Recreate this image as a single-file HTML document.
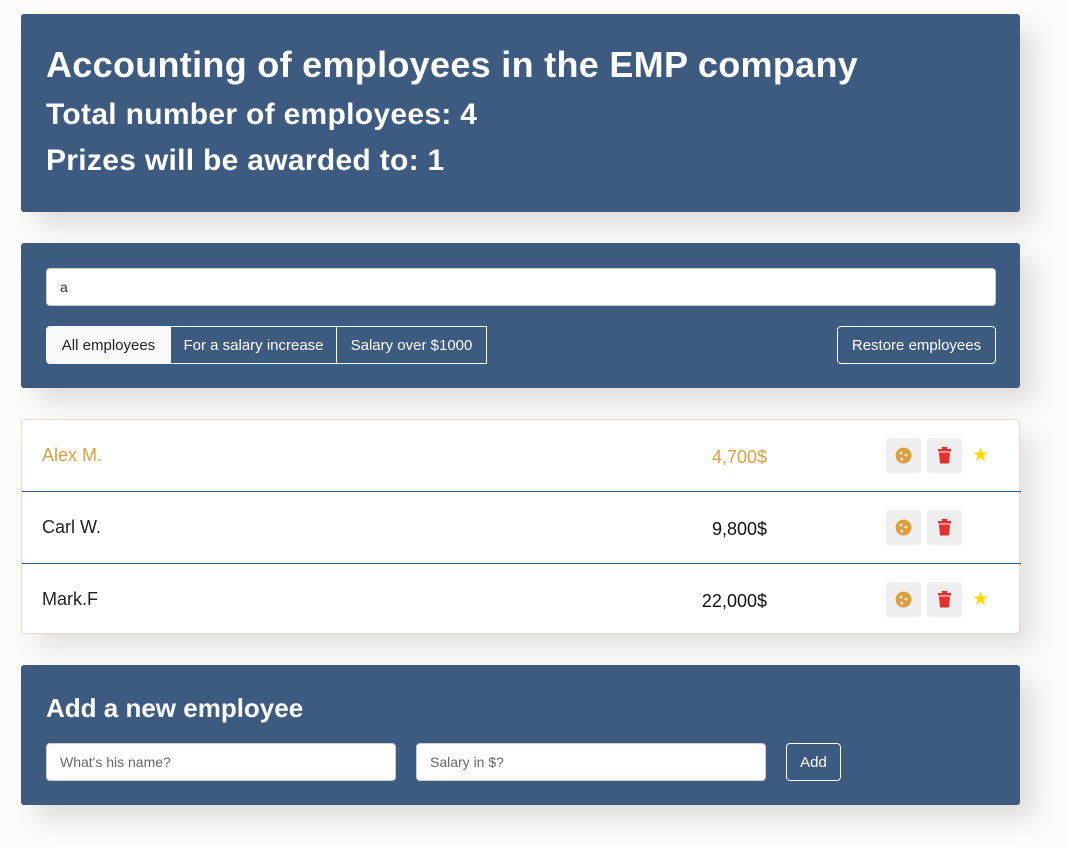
<!DOCTYPE html>
<html><head><style>
body{margin:0;background:#fdfcfa;font-family:"Liberation Sans",sans-serif;width:1069px;height:847px;overflow:hidden;position:relative}
.p{position:absolute;left:21px;width:999px;background:#3d5a80;border-radius:3px;box-shadow:15px 15px 25px rgba(0,0,0,.12);color:#fff}
.in{position:absolute;background:#fff;border-radius:4px;border:1px solid #ccc;box-sizing:border-box;font-size:14px;color:#333;padding:0 13px;display:flex;align-items:center}
.b{position:absolute;border:1px solid #fff;box-sizing:border-box;font-size:15px;display:flex;align-items:center;justify-content:center;color:#fff}
.row{position:absolute;left:0;width:999px;height:72px;border-bottom:1px solid #3d5a80;box-sizing:border-box}
.nm{position:absolute;left:20px;top:25px;font-size:18px;color:#222}
.sal{position:absolute;right:254px;top:27px;font-size:18px;color:#111}
.ib{position:absolute;top:18px;width:35px;height:35px;background:#efefef;border-radius:3px}
.st{position:absolute;left:950px;top:24px;color:#ffd700;font-size:19px}
</style></head><body>
<div class="p" style="top:14px;height:198px">
<div style="position:absolute;left:25px;top:30px;font-size:36px;font-weight:bold;letter-spacing:0.3px">Accounting of employees in the EMP company</div>
<div style="position:absolute;left:25px;top:84px;font-size:30px;font-weight:bold;letter-spacing:0.3px">Total number of employees: 4</div>
<div style="position:absolute;left:25px;top:130px;font-size:30px;font-weight:bold;letter-spacing:0.3px">Prizes will be awarded to: 1</div>
</div>
<div class="p" style="top:243px;height:145px">
<div class="in" style="left:25px;top:25px;width:950px;height:38px">a</div>
<div class="b" style="left:25px;top:83px;width:125px;height:38px;background:#f8f9fa;color:#222;border-radius:4px 0 0 4px">All employees</div>
<div class="b" style="left:149px;top:83px;width:167px;height:38px">For a salary increase</div>
<div class="b" style="left:315px;top:83px;width:151px;height:38px">Salary over $1000</div>
<div class="b" style="left:816px;top:83px;width:159px;height:38px;border-radius:4px">Restore employees</div>
</div>
<div style="position:absolute;left:21px;top:419px;width:999px;height:215px;background:#fff;border:1px solid #ddd;box-sizing:border-box;border-radius:3px;box-shadow:15px 15px 25px rgba(0,0,0,.1)">
<div class="row" style="top:0"><div class="nm" style="color:#e09f3e">Alex M.</div><div class="sal" style="color:#e09f3e">4,700$</div>
<div class="ib" style="left:864px"><svg width="35" height="35"><circle cx="17.5" cy="17.5" r="8" fill="#e09f3e"/><circle cx="15" cy="15" r="1.3" fill="#fff"/><circle cx="20" cy="17" r="1.3" fill="#fff"/><circle cx="16" cy="21" r="1.3" fill="#fff"/></svg></div>
<div class="ib" style="left:905px"><svg width="35" height="35"><rect x="11" y="11" width="13" height="2.5" fill="#e63030"/><rect x="15" y="9" width="5" height="2" fill="#e63030"/><path d="M12 14.5h11l-1 11h-9z" fill="#e63030"/></svg></div>
<div class="st">★</div></div>
<div class="row" style="top:72px"><div class="nm">Carl W.</div><div class="sal">9,800$</div>
<div class="ib" style="left:864px"><svg width="35" height="35"><circle cx="17.5" cy="17.5" r="8" fill="#e09f3e"/><circle cx="15" cy="15" r="1.3" fill="#fff"/><circle cx="20" cy="17" r="1.3" fill="#fff"/><circle cx="16" cy="21" r="1.3" fill="#fff"/></svg></div>
<div class="ib" style="left:905px"><svg width="35" height="35"><rect x="11" y="11" width="13" height="2.5" fill="#e63030"/><rect x="15" y="9" width="5" height="2" fill="#e63030"/><path d="M12 14.5h11l-1 11h-9z" fill="#e63030"/></svg></div></div>
<div class="row" style="top:144px;border:none"><div class="nm">Mark.F</div><div class="sal">22,000$</div>
<div class="ib" style="left:864px"><svg width="35" height="35"><circle cx="17.5" cy="17.5" r="8" fill="#e09f3e"/><circle cx="15" cy="15" r="1.3" fill="#fff"/><circle cx="20" cy="17" r="1.3" fill="#fff"/><circle cx="16" cy="21" r="1.3" fill="#fff"/></svg></div>
<div class="ib" style="left:905px"><svg width="35" height="35"><rect x="11" y="11" width="13" height="2.5" fill="#e63030"/><rect x="15" y="9" width="5" height="2" fill="#e63030"/><path d="M12 14.5h11l-1 11h-9z" fill="#e63030"/></svg></div>
<div class="st">★</div></div>
</div>
<div class="p" style="top:665px;height:140px">
<div style="position:absolute;left:25px;top:28px;font-size:26px;font-weight:bold">Add a new employee</div>
<div class="in" style="left:25px;top:78px;width:350px;height:38px;color:#666">What's his name?</div>
<div class="in" style="left:395px;top:78px;width:350px;height:38px;color:#666">Salary in $?</div>
<div class="b" style="left:765px;top:78px;width:55px;height:38px;border-radius:4px">Add</div>
</div>
</body></html>
